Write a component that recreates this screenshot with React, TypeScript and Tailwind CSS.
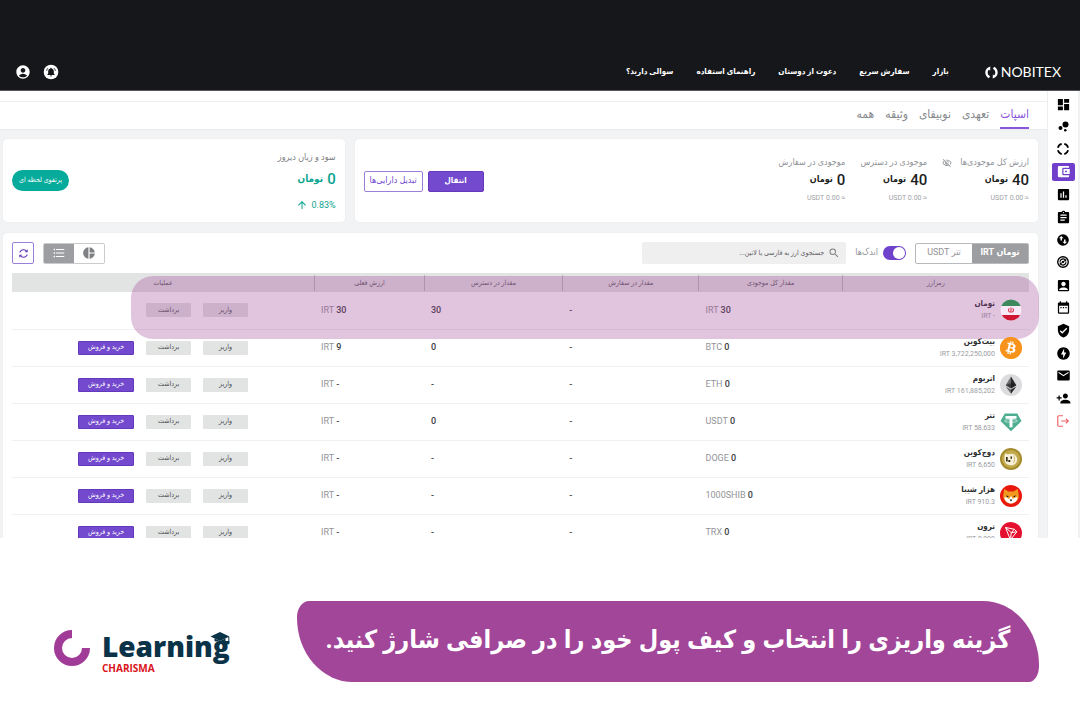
import { useState } from "react";
import type { ReactNode } from "react";
import {
  MdAccountBalanceWallet,
  MdAccountBox,
  MdAccountCircle,
  MdAssessment,
  MdAssignment,
  MdBubbleChart,
  MdDashboard,
  MdDateRange,
  MdMail,
  MdOfflineBolt,
  MdOutlineVisibilityOff,
  MdPersonAddAlt1,
  MdPieChart,
  MdArrowUpward,
  MdFormatListBulleted,
  MdLoop,
  MdSearch,
  MdVerifiedUser,
} from "react-icons/md";
import { FaBitcoin } from "react-icons/fa";

const navLinks = ["بازار", "سفارش سریع", "دعوت از دوستان", "راهنمای استفاده", "سوالی دارید؟"];
const tabs = ["اسپات", "تعهدی", "نوبیفای", "وثیقه", "همه"];

function RingIcon() {
  return (
    <svg viewBox="0 0 24 24" className="size-[14px]" fill="none" stroke="currentColor" strokeWidth="3">
      <path d="M14.200 3.300a9 9 0 0 1 6.500 6.500M20.700 14.200a9 9 0 0 1-6.500 6.500M9.800 20.700a9 9 0 0 1-6.500-6.500M3.300 9.800a9 9 0 0 1 6.500-6.500" />
    </svg>
  );
}

function SwapCircleIcon() {
  return (
    <svg viewBox="0 0 24 24" className="size-[14px]">
      <circle cx="12" cy="12" r="10" fill="currentColor" />
      <path fill="white" d="M9 5l4 4.200h-2.700V13H7.700V9.200H5zM15 19l-4-4.200h2.700V11h2.600v3.800H19z" />
    </svg>
  );
}

function ExchangeIcon() {
  return (
    <svg viewBox="0 0 24 24" className="size-[14px]" fill="none" stroke="currentColor">
      <circle cx="12" cy="12" r="9" strokeWidth="2.400" />
      <path strokeWidth="2.200" d="M6.800 11.500a5.300 5.300 0 0 1 9-3.200M17.200 12.500a5.300 5.300 0 0 1-9 3.200" />
      <path fill="currentColor" stroke="none" d="M17.600 6v5h-5zM6.400 18v-5h5z" />
      <circle cx="12" cy="12" r="2" fill="currentColor" stroke="none" />
    </svg>
  );
}

function LogoutIcon() {
  return (
    <svg viewBox="0 0 24 24" className="size-[14px] text-[#f0626a]" fill="none" stroke="currentColor" strokeWidth="2">
      <path d="M12 3H5a2 2 0 0 0-2 2v14a2 2 0 0 0 2 2h7M9 12h12M17 8l4 4-4 4" />
    </svg>
  );
}

function BellIcon() {
  return (
    <svg viewBox="0 0 24 24" className="size-4">
      <circle cx="12" cy="12" r="11" fill="white" />
      <path
        fill="#15171a"
        d="M12 5.500c.7 0 1.100.4 1.100 1.100 2 .5 3.100 2.200 3.100 4.300v3.300l1.300 1.600v.7H6.500v-.7l1.300-1.600v-3.300c0-2.100 1.100-3.800 3.100-4.300 0-.7.4-1.100 1.100-1.100zM10.500 17.200h3a1.500 1.500 0 0 1-3 0z"
      />
      <path fill="none" stroke="#15171a" strokeWidth="1.300" d="M7.500 6.200a6 6 0 0 0-2 4M16.500 6.200a6 6 0 0 1 2 4" />
    </svg>
  );
}

const sideItems: { label: string; icon: ReactNode; active?: boolean }[] = [
  { label: "داشبورد", icon: <MdDashboard className="size-[15px]" /> },
  { label: "بازارها", icon: <MdBubbleChart className="size-[15px]" /> },
  { label: "پرتفوی", icon: <RingIcon /> },
  { label: "کیف پول", icon: <MdAccountBalanceWallet className="size-[15px]" />, active: true },
  { label: "گزارش", icon: <MdAssessment className="size-[15px]" /> },
  { label: "سفارش‌ها", icon: <MdAssignment className="size-[15px]" /> },
  { label: "معاملات", icon: <SwapCircleIcon /> },
  { label: "تبدیل", icon: <ExchangeIcon /> },
  { label: "حساب", icon: <MdAccountBox className="size-[15px]" /> },
  { label: "تاریخچه", icon: <MdDateRange className="size-[15px]" /> },
  { label: "امنیت", icon: <MdVerifiedUser className="size-[15px]" /> },
  { label: "انرژی", icon: <MdOfflineBolt className="size-[15px]" /> },
  { label: "پیام‌ها", icon: <MdMail className="size-[15px]" /> },
  { label: "معرفی دوستان", icon: <MdPersonAddAlt1 className="size-[15px] -scale-x-100" /> },
  { label: "خروج", icon: <LogoutIcon /> },
];

function IranCoin() {
  return (
    <svg viewBox="0 0 22 22" className="size-[22px]">
      <clipPath id="flag">
        <circle cx="11" cy="11" r="10.500" />
      </clipPath>
      <g clipPath="url(#flag)">
        <rect width="22" height="22" fill="#f7e9f5" />
        <rect width="22" height="7" fill="#3f8a5d" />
        <rect y="16" width="22" height="6" fill="#cf1733" />
      </g>
      <path d="M11 8.500v5M9.300 9.300c-1.500 1.500-1 3.500 1 4M12.700 9.300c1.500 1.500 1 3.500-1 4" stroke="#d93550" strokeWidth="1.100" fill="none" />
    </svg>
  );
}

function BitcoinCoin() {
  return (
    <span className="flex size-[22px] items-center justify-center rounded-full bg-[#f7931a]">
      <svg viewBox="0 0 512 512" className="size-[22px] text-[#f7931a]">
        <circle cx="256" cy="256" r="220" fill="white" />
        <FaBitcoin size={512} />
      </svg>
    </span>
  );
}

function EthereumCoin() {
  return (
    <svg viewBox="0 0 22 22" className="size-[22px]">
      <circle cx="11" cy="11" r="11" fill="#dcdcde" />
      <path d="M11 2.500l-5.300 8.800L11 14.400z" fill="#6a6a6c" />
      <path d="M11 2.500l5.300 8.800L11 14.400z" fill="#29292b" />
      <path d="M11 8.900l-5.300 2.400L11 14.400l5.300-3.100z" fill="#1a1a1c" opacity=".6" />
      <path d="M5.700 12.400L11 19.800v-4.300z" fill="#6a6a6c" />
      <path d="M16.300 12.400L11 19.800v-4.300z" fill="#29292b" />
    </svg>
  );
}

function TetherCoin() {
  return (
    <svg viewBox="0 0 22 22" className="size-[22px]">
      <path d="M4.800 2.500h12.400L21.500 10 11 20.300.5 10z" fill="#4fae92" />
      <path d="M5.500 5h11v2.700h-4v8.600h-3V7.700h-4z" fill="white" />
      <path d="M9.500 8.700c-3 .1-5 .6-5 1.300s2.500 1.300 6.500 1.300 6.500-.6 6.500-1.300-2-1.200-5-1.300" fill="none" stroke="white" strokeWidth=".6" />
    </svg>
  );
}

function DogeCoin() {
  return (
    <svg viewBox="0 0 22 22" className="size-[22px]">
      <circle cx="11" cy="11" r="11" fill="#a38a2c" />
      <circle cx="11" cy="11" r="9" fill="#c2aa4c" />
      <path d="M5 5.500l3 .8c2.500-.9 5-.7 6.800.4l2 2.600c1 3-.3 6.300-3 7.500-3 1.200-7 .3-8.500-2-1-2-1.200-6-.3-9.300z" fill="#f7f0dc" />
      <path d="M6 9h1.700v4.500H6zM10.500 8.500h1.500v2.200h-1.500zM8.300 12h2v2h-2z" fill="#3b3012" />
      <path d="M13.500 7.500c1.500 2 1.500 5 0 7.500" stroke="#d9b96a" strokeWidth="1" fill="none" />
    </svg>
  );
}

function ShibaCoin() {
  return (
    <svg viewBox="0 0 22 22" className="size-[22px]">
      <circle cx="11" cy="11" r="11" fill="#e8190c" />
      <path d="M4.200 4l4.300 2.500h5L17.800 4l1 7c0 4.300-3.600 7.500-7.800 7.500s-7.800-3.200-7.800-7.500z" fill="#f29a1f" />
      <path d="M4.300 12.500c2-.8 3.700.2 4.700 1.800L11 11l2 3.300c1-1.600 2.700-2.600 4.700-1.800-.6 3.700-3.500 6-6.700 6s-6.100-2.300-6.700-6z" fill="white" />
      <path d="M6.200 10.200l2.800 1.200-1.800.9zM15.800 10.200L13 11.400l1.800.9zM9.600 14.400h2.800L11 16.600z" fill="#1c1210" />
    </svg>
  );
}

function TronCoin() {
  return (
    <svg viewBox="0 0 22 22" className="size-[22px]">
      <circle cx="11" cy="11" r="11" fill="#e5102f" />
      <path d="M5.500 5.500l8.800 1.700 2.500 2.600-6.400 8zM5.500 5.500l5.800 5.200 3-3.500M11.300 10.700l5.500-.9M11.300 10.700l-.9 7.100" fill="none" stroke="white" strokeWidth="1" strokeLinejoin="round" />
    </svg>
  );
}

type Row = {
  name: string;
  price: string;
  symbol: string;
  total: string;
  inOrder: string;
  available: string;
  value: string;
  icon: ReactNode;
  tradable: boolean;
};

const rows: Row[] = [
  { name: "تومان", price: "IRT -", symbol: "IRT", total: "30", inOrder: "-", available: "30", value: "30", icon: <IranCoin />, tradable: false },
  { name: "بیت‌کوین", price: "IRT 3,722,250,000", symbol: "BTC", total: "0", inOrder: "-", available: "0", value: "9", icon: <BitcoinCoin />, tradable: true },
  { name: "اتریوم", price: "IRT 161,885,202", symbol: "ETH", total: "0", inOrder: "-", available: "-", value: "-", icon: <EthereumCoin />, tradable: true },
  { name: "تتر", price: "IRT 58,633", symbol: "USDT", total: "0", inOrder: "-", available: "0", value: "-", icon: <TetherCoin />, tradable: true },
  { name: "دوج‌کوین", price: "IRT 6,650", symbol: "DOGE", total: "0", inOrder: "-", available: "-", value: "-", icon: <DogeCoin />, tradable: true },
  { name: "هزار شیبا", price: "IRT 910.3", symbol: "1000SHIB", total: "0", inOrder: "-", available: "-", value: "-", icon: <ShibaCoin />, tradable: true },
  { name: "ترون", price: "IRT 9,999", symbol: "TRX", total: "0", inOrder: "-", available: "-", value: "-", icon: <TronCoin />, tradable: true },
];

const columns = [
  { title: "رمزارز", width: "w-[18.4%]" },
  { title: "مقدار کل موجودی", width: "w-[14.1%]" },
  { title: "مقدار در سفارش", width: "w-[13.4%]" },
  { title: "مقدار در دسترس", width: "w-[13.6%]" },
  { title: "ارزش فعلی", width: "w-[10.8%]" },
  { title: "عملیات", width: "w-[29.7%]" },
];

function Header() {
  return (
    <header className="flex items-center border-b border-[#55565a] bg-[#15171a] pt-[54px] pr-[19px] pl-[15px]">
      <a href="#home" dir="ltr" className="flex h-9 items-center gap-[3px] text-white">
        <svg viewBox="0 0 24 24" className="size-[13px]" fill="white">
          <path d="M9.500 1C4 2.500.5 7 .5 12c0 4.500 2.500 8.500 6.500 10.500L9.500 19C6.500 17.500 5 15 5 12s1.500-5.500 4.500-7z" />
          <path d="M14.500 23c5.500-1.500 9-6 9-11 0-4.500-2.500-8.500-6.500-10.500L14.500 5c3 1.500 4.500 4 4.500 7s-1.500 5.500-4.500 7z" />
          <path d="M9.500 1v8L7 6zM14.500 23v-8l2.500 3z" />
        </svg>
        <span className="font-['Lato',sans-serif] text-[14px] leading-5">NOBITEX</span>
      </a>
      <nav className="mr-9 flex flex-1 items-center gap-[23px] text-[8px] font-bold text-white">
        {navLinks.map((l) => (
          <a key={l} href="#nav" className="whitespace-nowrap">{l}</a>
        ))}
      </nav>
      <div className="flex items-center gap-3 text-white">
        <button type="button" aria-label="اعلان‌ها"><BellIcon /></button>
        <button type="button" aria-label="حساب کاربری"><MdAccountCircle className="size-4" /></button>
      </div>
    </header>
  );
}

function Stat({ label, value, hideIcon }: { label: string; value: string; hideIcon?: boolean }) {
  return (
    <div>
      <div className="flex h-[18px] items-center gap-2 text-[9px] whitespace-nowrap text-[#929497]">
        {label}
        {hideIcon && <MdOutlineVisibilityOff className="size-[10px]" />}
      </div>
      <div className="flex h-4 items-center gap-1 text-[#1c1e21]">
        <span className="text-[15px] font-medium">{value}</span>
        <span className="text-[9px] font-bold">تومان</span>
      </div>
      <div className="flex h-5 items-center text-[7px] text-[#a0a2a5]">≈ 0.00 USDT</div>
    </div>
  );
}

function Summary() {
  return (
    <div className="grid grid-cols-[2fr_1fr] gap-[10px]">
      <section className="flex items-center rounded-sm bg-white px-[9px] pt-[15px] pb-[14px] shadow-[0_0_1px_#d5d8da]">
        <div className="flex flex-1 items-start gap-[15px]">
          <Stat label="ارزش کل موجودی‌ها" value="40" hideIcon />
          <Stat label="موجودی در دسترس" value="40" />
          <Stat label="موجودی در سفارش" value="0" />
        </div>
        <button type="button" className="ml-[5px] h-[21px] w-[56px] rounded-xs border border-[#6438bd] bg-[#7349cd] text-[8px] font-bold text-white">انتقال</button>
        <button type="button" className="h-[21px] w-[59px] rounded-xs border border-[#9a80db] text-[9px] whitespace-nowrap text-[#7349cd]">تبدیل دارایی‌ها</button>
      </section>
      <section className="flex items-center rounded-sm bg-white px-[9px] shadow-[0_0_1px_#d5d8da]">
        <div className="flex-1 text-[#0ba590]">
          <div className="text-[9px] leading-4 text-[#7e8083]">سود و زیان دیروز</div>
          <div className="mt-1 flex items-center gap-1 leading-5">
            <span className="text-[15px] font-medium">0</span>
            <span className="text-[10px] font-bold">تومان</span>
          </div>
          <div className="mt-2 flex items-center gap-1 text-[9px] leading-4">
            <span dir="ltr">0.83%</span>
            <MdArrowUpward className="size-3" />
          </div>
        </div>
        <button type="button" className="h-[21px] w-[57px] rounded-full bg-[#06ab9b] text-[7px] whitespace-nowrap text-white">پرتفوی لحظه ای</button>
      </section>
    </div>
  );
}

function Toolbar() {
  const [small, setSmall] = useState(true);
  return (
    <div className="flex h-[22px] items-center gap-[9px]">
      <div className="flex h-[21px] w-[114px] rounded-xs border border-[#b8babc] text-[9px]">
        <button type="button" className="flex-1 bg-[#9c9ea1] font-bold text-white">تومان IRT</button>
        <button type="button" className="flex-1 text-[#929497]">تتر USDT</button>
      </div>
      <label className="flex items-center gap-[5px] text-[9px] text-[#929497]">
        <input
          type="checkbox"
          checked={small}
          onChange={(e) => setSmall(e.target.checked)}
          className="peer sr-only"
        />
        <span className="flex h-[14px] w-[23px] items-center justify-end rounded-full bg-[#c5c7ca] p-px peer-checked:justify-start peer-checked:bg-[#6f42cb]">
          <span className="size-3 rounded-full bg-white" />
        </span>
        اندک‌ها
      </label>
      <label className="flex h-[22px] w-[204px] items-center gap-1 rounded-xs bg-[#efefef] px-[6px] text-[#7e8083]">
        <MdSearch className="size-[12px]" />
        <input
          type="text"
          aria-label="جستجوی ارز"
          placeholder="جستجوی ارز به فارسی یا لاتین..."
          className="w-full flex-1 bg-transparent text-[7px] outline-none placeholder:text-[#5e6063]"
        />
      </label>
      <div className="mr-auto flex h-[21px] w-[62px] overflow-hidden rounded-xs border border-[#c9cbcd] text-[#7e8083]">
        <button type="button" aria-label="نمودار" className="flex flex-1 items-center justify-center">
          <MdPieChart className="size-[14px]" />
        </button>
        <button type="button" aria-label="فهرست" className="flex flex-1 items-center justify-center bg-[#9c9ea1] text-white">
          <MdFormatListBulleted className="size-[14px]" />
        </button>
      </div>
      <button type="button" aria-label="تازه‌سازی" className="flex size-[22px] items-center justify-center rounded-xs border border-[#9a80db] text-[#6438bd]">
        <MdLoop className="size-[13px] -scale-x-100 rotate-45" />
      </button>
    </div>
  );
}

function AssetsTable() {
  return (
    <div className="relative mt-[9px]">
      <table className="w-full table-fixed border-collapse">
        <thead>
          <tr className="h-[19px] bg-[#e2e4e4] text-[7px] text-[#55575a]">
            {columns.map((c, i) => (
              <th key={c.title} scope="col" className={`${c.width} p-0 font-normal`}>
                <div className={i < 5 ? "border-l border-[#b5b7b9] leading-4" : "leading-4"}>{c.title}</div>
              </th>
            ))}
          </tr>
        </thead>
        <tbody>
          {rows.map((r) => (
            <tr key={r.name} className="h-[37px] border-b border-[#eff0f1] text-[9px] text-[#3c3e41]">
              <td className="p-0 pr-[7px]">
                <div className="flex items-center gap-[5px]">
                  <span className="relative z-20">{r.icon}</span>
                  <div>
                    <div className="text-[8px] leading-3 font-bold text-[#2b2d30]">{r.name}</div>
                    <div dir="ltr" className="text-right text-[7px] leading-3 text-[#9a9c9f]">{r.price}</div>
                  </div>
                </div>
              </td>
              <td dir="ltr" className="p-0 pl-[7px] text-left">
                <span className="text-[#929497]">{r.symbol}</span> <span className="font-medium">{r.total}</span>
              </td>
              <td dir="ltr" className="p-0 pl-[7px] text-left font-medium">{r.inOrder}</td>
              <td dir="ltr" className="p-0 pl-[7px] text-left font-medium">{r.available}</td>
              <td dir="ltr" className="p-0 pl-[7px] text-left">
                <span className="text-[#929497]">IRT</span> <span className="font-medium">{r.value}</span>
              </td>
              <td className="p-0 pr-[66px]">
                <div className="flex items-center gap-3 text-[7px] text-[#4c4e51]">
                  <button type="button" className="h-[14px] w-[45px] rounded-[1px] bg-[#e2e4e4]">واریز</button>
                  <button type="button" className="h-[14px] w-[45px] rounded-[1px] bg-[#e2e4e4]">برداشت</button>
                  {r.tradable && (
                    <button type="button" className="h-[14px] w-[56px] rounded-[1px] border border-[#6438bd] bg-[#7349cd] text-white">خرید و فروش</button>
                  )}
                </div>
              </td>
            </tr>
          ))}
        </tbody>
      </table>
      <div className="pointer-events-none absolute top-[3px] -right-[10px] left-[119px] z-10 h-[63px] rounded-[22px] bg-[#a24699]/32" />
    </div>
  );
}

function Sidebar() {
  return (
    <aside className="w-[33px] border-r-2 border-l border-r-[#f0f1f2] border-l-[#eceeef] bg-white pt-1">
      <nav className="flex h-[335px] flex-col items-center justify-between">
        {sideItems.map((s) => (
          <a
            key={s.label}
            href="#section"
            aria-label={s.label}
            className={
              s.active
                ? "flex h-[18px] w-[23px] items-center justify-center rounded-xs bg-[#7040cc] text-white"
                : "flex h-[18px] w-[23px] items-center justify-center text-black"
            }
          >
            {s.icon}
          </a>
        ))}
      </nav>
    </aside>
  );
}

function Brand() {
  return (
    <div dir="ltr" className="flex items-start gap-3 pt-[29px]">
      <svg viewBox="0 0 36 36" className="size-9">
        <path d="M18 4A14 14 0 1 0 32 18" fill="none" stroke="#a03c98" strokeWidth="8" />
      </svg>
      <div className="relative font-['Open_Sans',sans-serif]">
        <div className="text-[28px] leading-8 font-extrabold text-[#0b3348]">Learning</div>
        <div className="text-[10px] leading-3 font-bold text-[#d9141c]">CHARISMA</div>
        <svg viewBox="0 0 20 12" className="absolute top-[2px] right-0 h-3 w-5">
          <path d="M10 0l9.500 4.500L10 9 .5 4.500z" fill="#0b3348" />
          <path d="M4.500 6.500L10 9l5.500-2.500V9c-3 1.200-8 1.200-11 0zM18.300 5h1v6h-1z" fill="#0b3348" />
        </svg>
      </div>
    </div>
  );
}

export default function App() {
  return (
    <div dir="rtl" lang="fa" className="min-h-screen bg-white font-['Roboto','DejaVu_Sans_Condensed','DejaVu_Sans',sans-serif]">
      <Header />
      <div className="flex max-h-[447px] overflow-hidden">
        <Sidebar />
        <main className="min-w-0 flex-1 bg-[#f1f3f4]">
          <div className="border-b border-[#eeeff0] bg-white pt-[10px]" />
          <nav className="flex gap-[11px] border-b border-[#e8eaeb] bg-white pr-[18px] text-[12px] text-[#87898c]">
            {tabs.map((t, i) => (
              <a
                key={t}
                href="#tab"
                className={
                  i === 0
                    ? "h-[27px] border-b-2 border-[#8a55dc] leading-6 text-[#8a55dc]"
                    : "h-[27px] leading-6"
                }
              >
                {t}
              </a>
            ))}
          </nav>
          <div className="pt-[9px] pr-[9px] pl-[3px]">
            <Summary />
            <section className="mt-[11px] rounded-sm bg-white px-[9px] pt-[9px] shadow-[0_0_1px_#d5d8da]">
              <Toolbar />
              <AssetsTable />
            </section>
          </div>
        </main>
      </div>
      <footer className="flex items-start gap-[67px] pt-[63px] pr-[41px] pb-8 pl-[54px]">
        <p className="flex h-[81px] min-w-0 flex-1 items-center justify-center rounded-[12px_56px_10px_56px/16px_64px_16px_64px] bg-[#a24699] pb-1 text-[25px] font-bold whitespace-nowrap text-white">
          گزینه واریزی را انتخاب و کیف پول خود را در صرافی شارژ کنید.
        </p>
        <Brand />
      </footer>
    </div>
  );
}
